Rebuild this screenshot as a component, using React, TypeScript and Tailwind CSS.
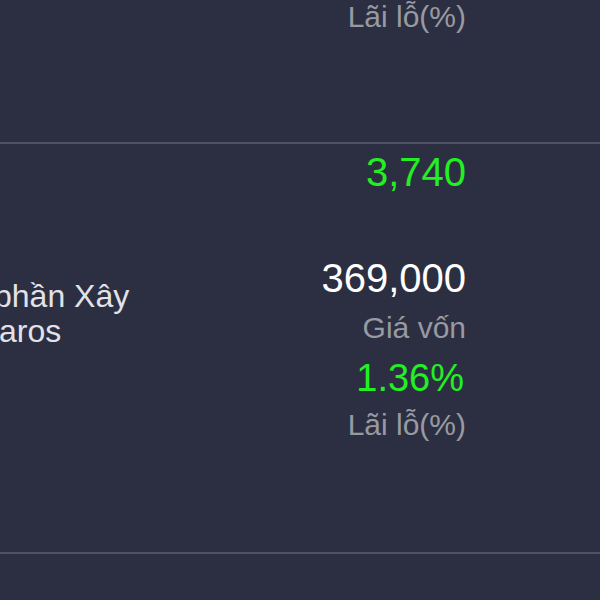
export default function App() {
  return (
    <div className="w-[600px] h-[600px] overflow-hidden bg-[#2c2f42] font-['Liberation_Sans',Arial,sans-serif]">
      <div className="flex h-[142px] justify-end pr-[134px] pt-[2px]">
        <div className="text-[30px] leading-[30px] text-[#989aa2]">Lãi lỗ(%)</div>
      </div>
      <div className="h-[2px] bg-[#4f5265]" />
      <div className="flex h-[408px] justify-between overflow-hidden pr-[134px]">
        <div className="mt-[135px] flex flex-col text-[32px] leading-[35px] text-[#e2e2e8] whitespace-nowrap">
          <div className="ml-[-6px]">phần Xây</div>
          <div className="ml-[-1px]">aros</div>
        </div>
        <div className="flex flex-col items-end pt-[4px] whitespace-nowrap">
          <div className="text-[40px] leading-[48px] text-[#22f022]">3,740</div>
          <div className="mt-[57px] text-[40px] leading-[51px] text-white">369,000</div>
          <div className="text-[30px] leading-[48px] text-[#989aa2]">Giá vốn</div>
          <div className="mr-[2px] text-[38px] leading-[52px] text-[#22f022]">1.36%</div>
          <div className="text-[30px] leading-[42px] text-[#989aa2]">Lãi lỗ(%)</div>
        </div>
      </div>
      <div className="h-[2px] bg-[#4f5265]" />
    </div>
  );
}
